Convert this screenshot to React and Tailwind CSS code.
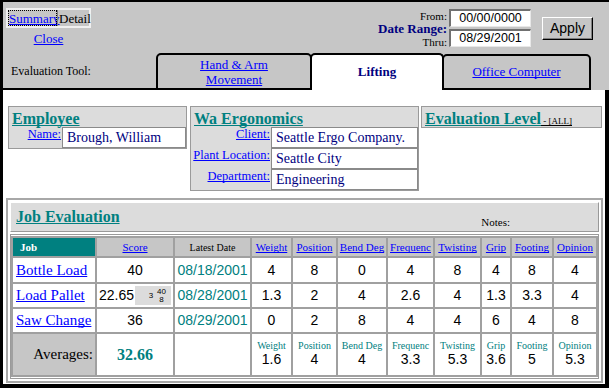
const cols = ["Weight", "Position", "Bend Deg", "Frequenc", "Twisting", "Grip", "Footing", "Opinion"];

const rows = [
  { job: "Bottle Load", score: "40", date: "08/18/2001", vals: ["4", "8", "0", "4", "8", "4", "8", "4"] },
  { job: "Load Pallet", score: "22.65", extra: true, date: "08/28/2001", vals: ["1.3", "2", "4", "2.6", "4", "1.3", "3.3", "4"] },
  { job: "Saw Change", score: "36", date: "08/29/2001", vals: ["0", "2", "8", "4", "4", "6", "4", "8"] },
];

const averages = ["1.6", "4", "4", "3.3", "5.3", "3.6", "5", "5.3"];

const sans = "font-['Liberation_Sans',Arial,sans-serif]";

function Link({ children, className = "" }) {
  return <a className={`text-[#0000ff] underline cursor-pointer ${className}`}>{children}</a>;
}

// label + value box row used in the info panels
function Field({ label, value, labelWidth }) {
  return (
    <div className="flex h-[21px]">
      <div className="text-right text-[12.5px] leading-[15px] pr-[1px] whitespace-nowrap flex justify-end" style={{ width: labelWidth }}>
        <Link>{label}</Link>
      </div>
      <div className="flex-1 bg-white border border-[#8a8a8a] text-[14px] leading-[19px] text-[#000080] pl-[4px] whitespace-nowrap overflow-hidden">
        {value}
      </div>
    </div>
  );
}

function PanelTitle({ children }) {
  return <span className="text-[16px] leading-[19px] font-bold text-[#008080] underline">{children}</span>;
}

export default function App() {
  return (
    <div className="w-[609px] h-[388px] overflow-hidden bg-white border-t-2 border-l-[3px] border-black flex flex-col font-['Liberation_Serif',serif] text-black [text-decoration-skip-ink:none]">
      {/* Header */}
      <div className="bg-[#c6c6c6] flex flex-col shrink-0">
        <div className="h-[51px] flex items-start">
          <div className="ml-[3px] mt-[6px] w-[85px]">
            <div className="flex h-[20px] border-2 border-[#f0f0f0] text-[13px] leading-[15px]">
              <div className="w-[49px] outline outline-1 outline-dotted outline-black -outline-offset-1 flex items-center pl-[1px]">
                <Link>Summary</Link>
              </div>
              <div className="flex-1 border-l border-[#808080] flex items-center pl-[1px]">Detail</div>
            </div>
            <div className="text-center text-[13px] leading-[15px] mt-[3px]">
              <Link>Close</Link>
            </div>
          </div>

          <div className="ml-auto mr-[16px] mt-[7px] flex items-center">
            <div className="flex flex-col items-end w-[70px] h-[38px] mr-[2px]">
              <div className="text-[11px] leading-[12px] mt-[1px]">From:</div>
              <div className="text-[13px] leading-[14px] font-bold text-[#000080]">Date Range:</div>
              <div className="text-[11px] leading-[12px]">Thru:</div>
            </div>
            <div className="flex flex-col gap-[2px]">
              <div className={`w-[82px] h-[18px] bg-white border-t-2 border-l-2 border-[#707070] border-b border-r border-b-[#e8e8e8] border-r-[#e8e8e8] text-center text-[12.5px] leading-[15px] ${sans}`}>
                00/00/0000
              </div>
              <div className={`w-[82px] h-[18px] bg-white border-t-2 border-l-2 border-[#707070] border-b border-r border-b-[#e8e8e8] border-r-[#e8e8e8] text-center text-[12.5px] leading-[15px] ${sans}`}>
                08/29/2001
              </div>
            </div>
            <div className={`ml-[11px] w-[51px] h-[23px] border border-t-white border-l-white border-b-black border-r-black shadow-[inset_-1px_-1px_0_#808080] flex items-center justify-center text-[14px] ${sans}`}>
              Apply
            </div>
          </div>
        </div>

        {/* Tabs */}
        <div className="h-[37px] flex">
          <div className="w-[153px] border-b-2 border-black flex items-center pl-[8px] text-[12px]">
            Evaluation Tool:
          </div>
          <div className="w-[156px] border-2 border-black rounded-t-[5px] flex flex-col items-center justify-center text-[13px] leading-[15px]">
            <Link>Hand &amp; Arm</Link>
            <Link>Movement</Link>
          </div>
          <div className="w-[134px] -ml-[2px] relative z-10 border-2 border-b-0 border-black bg-white rounded-t-[5px] flex items-center justify-center pb-[2px] text-[13px] font-bold text-[#000080]">
            Lifting
          </div>
          <div className="w-[149px] -ml-[2px] mt-[1px] border-2 border-black rounded-t-[5px] flex items-center justify-center text-[13px]">
            <Link>Office Computer</Link>
          </div>
          <div className="flex-1" />
        </div>
      </div>

      {/* Content */}
      <div className="flex-1 border-r-4 border-b-4 border-black flex flex-col">
        <div className="flex items-start pt-[16px] pl-[5px]">
          <div className="w-[179px] border border-[#9a9a9a] bg-[#dcdcdc]">
            <div className="h-[20px] pl-[3px]">
              <PanelTitle>Employee</PanelTitle>
            </div>
            <Field label="Name:" value="Brough, William" labelWidth={53} />
          </div>

          <div className="w-[229px] ml-[3px] border border-[#9a9a9a] bg-[#dcdcdc]">
            <div className="h-[20px] pl-[3px]">
              <PanelTitle>Wa Ergonomics</PanelTitle>
            </div>
            <Field label="Client:" value="Seattle Ergo Company." labelWidth={80} />
            <Field label="Plant Location:" value="Seattle City" labelWidth={80} />
            <Field label="Department:" value="Engineering" labelWidth={80} />
          </div>

          <div className="w-[181px] ml-[2px] h-[22px] border border-[#9a9a9a] bg-[#dcdcdc] pl-[3px] whitespace-nowrap">
            <PanelTitle>Evaluation Level</PanelTitle>
            <span className="text-[9px] underline"> - [ALL]</span>
          </div>
        </div>

        {/* Job evaluation frame */}
        <div className="ml-[3px] mt-[7px] w-[597px] h-[185px] border-2 border-[#a8a8a8] p-[2px] flex flex-col gap-[2px]">
          <div className="h-[30px] shrink-0 border border-t-white border-l-white border-b-[#999] border-r-[#999] bg-[#dcdcdc] flex items-center pl-[5px]">
            <span className="text-[16px] font-bold text-[#008080] underline">Job Evaluation</span>
            <span className="ml-auto mr-[88px] mt-[10px] text-[11px]">Notes:</span>
          </div>

          <div className="flex-1 border border-[#9a9a9a] pt-[1px]">
            <div className="grid grid-cols-[82px_76px_75px_39px_43px_48px_45px_45px_28px_40px_42px] grid-rows-[18px_24px_23px_23px_41px] gap-[2px] p-[2px] bg-[#a0a0a0] w-[587px]">
              {/* header row */}
              <div className="bg-[#008080] text-white font-bold text-[11px] flex items-center pl-[7px]">Job</div>
              <div className="bg-[#c6c6c6] text-[11px] flex items-center justify-center">
                <Link>Score</Link>
              </div>
              <div className="bg-[#c6c6c6] text-[10px] flex items-center justify-center">Latest Date</div>
              {cols.map((c) => (
                <div key={c} className="bg-[#c6c6c6] text-[11px] flex items-center justify-center whitespace-nowrap">
                  <Link>{c}</Link>
                </div>
              ))}

              {/* data rows */}
              {rows.map((r) => (
                <div key={r.job} className="contents">
                  <div className="bg-white flex items-center pl-[3px] text-[15px] whitespace-nowrap">
                    <Link>{r.job}</Link>
                  </div>
                  {r.extra ? (
                    <div className={`bg-white flex items-center pl-[2px] text-[14px] ${sans}`}>
                      {r.score}
                      <div className="ml-auto mr-[2px] w-[36px] h-[19px] bg-[#dcdcdc] flex items-center justify-end pr-[5px] text-[8px] leading-[8px]">
                        <span className="mr-[4px]">3</span>
                        <span className="flex flex-col items-center">
                          <span>40</span>
                          <span>8</span>
                        </span>
                      </div>
                    </div>
                  ) : (
                    <div className={`bg-white flex items-center justify-center text-[14px] ${sans}`}>{r.score}</div>
                  )}
                  <div className={`bg-white flex items-center justify-center text-[14px] text-[#008080] ${sans}`}>{r.date}</div>
                  {r.vals.map((v, i) => (
                    <div key={i} className={`bg-white flex items-center justify-center text-[14px] ${sans}`}>
                      {v}
                    </div>
                  ))}
                </div>
              ))}

              {/* averages */}
              <div className="bg-[#c6c6c6] flex items-center justify-end pr-[2px] text-[15px]">Averages:</div>
              <div className="bg-white flex items-center justify-center text-[16px] font-bold text-[#008080]">32.66</div>
              <div className="bg-white" />
              {averages.map((v, i) => (
                <div key={i} className="bg-white flex flex-col items-center pt-[6px]">
                  <span className="text-[10px] leading-[11px] text-[#008080] whitespace-nowrap">{cols[i]}</span>
                  <span className={`text-[14px] leading-[17px] ${sans}`}>{v}</span>
                </div>
              ))}
            </div>
          </div>
        </div>
      </div>
    </div>
  );
}
